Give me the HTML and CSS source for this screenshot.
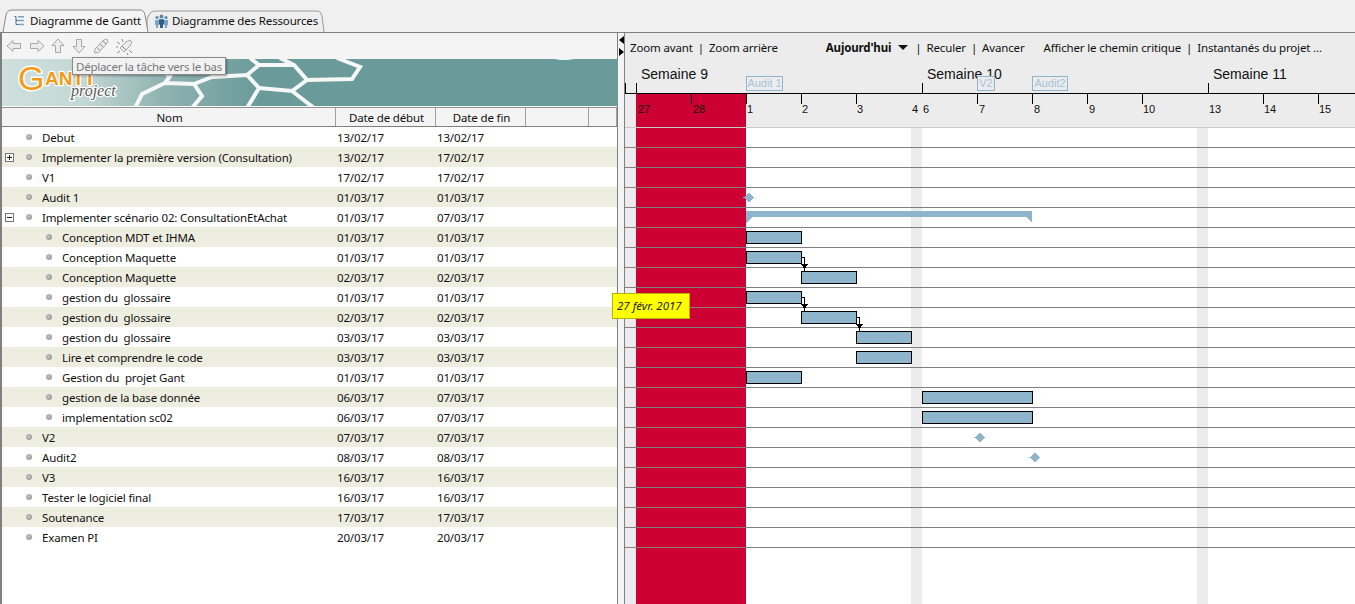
FILE: index.html
```html
<!DOCTYPE html>
<html lang="fr">
<head>
<meta charset="utf-8">
<title>GanttProject</title>
<link rel="stylesheet" href="styles.css">
</head>
<body>
<div class="app">
  <div class="tabbar">
    <svg class="tab-shapes" width="340" height="33" viewBox="0 0 340 33">
      <path class="tab-off" d="M147 32 L147 20 Q149 11 155 11 L318 11 Q321 11 322 16 L324 32"/>
      <path class="tab-on" d="M3 32 L6 15 Q7 10 12 10 L140 10 Q144 10 145 15 L148 32"/>
    </svg>
    <div class="tab tab-first">
      <svg width="12" height="12" viewBox="0 0 12 12"><g class="ico-tree"><path d="M1.5 1.5H3V9.5H5M3 5.5H5"/><path d="M5 1h6v1.5H5zM5 4.8h6v1.5H5zM5 8.7h6v1.5H5z"/></g></svg>
      <span>Diagramme de Gantt</span>
    </div>
    <div class="tab tab-second">
      <svg width="15" height="14" viewBox="0 0 15 14"><g class="ico-people"><circle cx="3" cy="3.5" r="1.6"/><circle cx="12" cy="3.5" r="1.6"/><circle cx="7.5" cy="2.5" r="1.9"/><path d="M1 6h4v5H4v3H2v-3H1zM10 6h4v5h-1v3h-2v-3h-1z"/><path class="front" d="M5 5.2h5v5.3H9V14H6v-3.500H5z"/></g></svg>
      <span>Diagramme des Ressources</span>
    </div>
  </div>

  <div class="main">
    <section class="tree-panel">
      <div class="toolbar">
        <svg width="16" height="14" viewBox="0 0 16 14"><path class="tool" d="M1 7 L7 1.500 V4.500 H14.500 V9.500 H7 V12.500 Z"/></svg>
        <svg class="tool-tight" width="16" height="14" viewBox="0 0 16 14"><path class="tool" d="M15 7 L9 1.500 V4.500 H1.500 V9.500 H9 V12.500 Z"/></svg>
        <svg width="14" height="16" viewBox="0 0 14 16"><path class="tool" d="M7 1 L13 7.500 H9.500 V14.500 H4.500 V7.500 H1 Z"/></svg>
        <svg width="14" height="16" viewBox="0 0 14 16"><path class="tool" d="M7 15 L13 8.500 H9.500 V1.500 H4.500 V8.500 H1 Z"/></svg>
        <svg width="16" height="16" viewBox="0 0 16 16"><path class="tool" d="M2 11 L10 2.500 L13.500 1 L15 3 L13.500 6 L5.500 14.500 L1.500 15 Z"/><path class="tool-line" d="M4 9.500 L7 12.500 M7 6 L10 9 M10 3 L13 6"/></svg>
        <svg width="18" height="17" viewBox="0 0 18 17"><path class="tool" d="M4 10 L10 4 L14 2 L16 4 L14 8 L8 14 Z"/><path class="tool-line" d="M6 8 L10 12 M1 4 L4 6 M6 1 L7 4 M1 15 L4 13 M13 12 L16 15 M2 9 H0 M11 15 L12 17"/></svg>
      </div>

      <div class="banner">
        <svg class="banner-art" width="616" height="47" viewBox="0 59 616 47">
          <defs>
            <linearGradient id="bannerFade" x1="0" x2="1" y1="0" y2="0">
              <stop offset="0" stop-color="#cfdfde"/>
              <stop offset="0.13" stop-color="#c4d8d6"/>
              <stop offset="0.26" stop-color="#8fb3b1"/>
              <stop offset="0.42" stop-color="#6a9a9a"/>
              <stop offset="1" stop-color="#6a9a9a"/>
            </linearGradient>
          </defs>
          <rect x="0" y="59" width="616" height="47" fill="url(#bannerFade)"/>
          <g class="hex">
            <path d="M133 108 L140 94 L163 83 L192 84 L200 96 L190 108"/>
            <path d="M163 83 L168 76 L158 70"/>
            <path d="M192 84 L210 77 L245 75 L257 88 L245 108"/>
            <path d="M245 75 L257 65 L248 58"/>
            <path d="M257 65 L292 65 L305 80 L290 91 L257 88"/>
            <path d="M292 65 L278 58"/>
            <path d="M305 80 L350 79 L358 67 L335 58"/>
            <path d="M290 91 L312 108"/>
          </g>
          <path class="hex-sliver" d="M553 59 H572 L566 60 H558 Z"/>
        </svg>
        <svg class="logo" width="125" height="46" viewBox="0 0 125 46">
          <text class="logo-g" x="14" y="30">G</text>
          <text class="logo-ant" x="41" y="25">ANTT</text>
          <text class="logo-project" x="67" y="36">project</text>
        </svg>
      </div>

      <div class="thead">
        <div class="th th-name">Nom</div>
        <div class="th th-start">Date de début</div>
        <div class="th th-end">Date de fin</div>
        <div class="th th-x1"></div>
        <div class="th th-x2"></div>
      </div>

      <div class="tbody">
        <div class="row"><div class="cell-name"><span class="gutter"></span><i class="bullet"></i><span>Debut</span></div><div class="cell-date">13/02/17</div><div class="cell-date">13/02/17</div></div>
        <div class="row alt"><div class="cell-name"><span class="gutter"><b class="toggle plus"></b></span><i class="bullet"></i><span>Implementer la première version (Consultation)</span></div><div class="cell-date">13/02/17</div><div class="cell-date">17/02/17</div></div>
        <div class="row"><div class="cell-name"><span class="gutter"></span><i class="bullet"></i><span>V1</span></div><div class="cell-date">17/02/17</div><div class="cell-date">17/02/17</div></div>
        <div class="row alt"><div class="cell-name"><span class="gutter"></span><i class="bullet"></i><span>Audit 1</span></div><div class="cell-date">01/03/17</div><div class="cell-date">01/03/17</div></div>
        <div class="row"><div class="cell-name"><span class="gutter"><b class="toggle"></b></span><i class="bullet"></i><span>Implementer scénario 02: ConsultationEtAchat</span></div><div class="cell-date">01/03/17</div><div class="cell-date">07/03/17</div></div>
        <div class="row alt"><div class="cell-name sub"><span class="gutter"></span><i class="bullet"></i><span>Conception MDT et IHMA</span></div><div class="cell-date">01/03/17</div><div class="cell-date">01/03/17</div></div>
        <div class="row"><div class="cell-name sub"><span class="gutter"></span><i class="bullet"></i><span>Conception Maquette</span></div><div class="cell-date">01/03/17</div><div class="cell-date">01/03/17</div></div>
        <div class="row alt"><div class="cell-name sub"><span class="gutter"></span><i class="bullet"></i><span>Conception Maquette</span></div><div class="cell-date">02/03/17</div><div class="cell-date">02/03/17</div></div>
        <div class="row"><div class="cell-name sub"><span class="gutter"></span><i class="bullet"></i><span>gestion du&nbsp; glossaire</span></div><div class="cell-date">01/03/17</div><div class="cell-date">01/03/17</div></div>
        <div class="row alt"><div class="cell-name sub"><span class="gutter"></span><i class="bullet"></i><span>gestion du&nbsp; glossaire</span></div><div class="cell-date">02/03/17</div><div class="cell-date">02/03/17</div></div>
        <div class="row"><div class="cell-name sub"><span class="gutter"></span><i class="bullet"></i><span>gestion du&nbsp; glossaire</span></div><div class="cell-date">03/03/17</div><div class="cell-date">03/03/17</div></div>
        <div class="row alt"><div class="cell-name sub"><span class="gutter"></span><i class="bullet"></i><span>Lire et comprendre le code</span></div><div class="cell-date">03/03/17</div><div class="cell-date">03/03/17</div></div>
        <div class="row"><div class="cell-name sub"><span class="gutter"></span><i class="bullet"></i><span>Gestion du&nbsp; projet Gant</span></div><div class="cell-date">01/03/17</div><div class="cell-date">01/03/17</div></div>
        <div class="row alt"><div class="cell-name sub"><span class="gutter"></span><i class="bullet"></i><span>gestion de la base donnée</span></div><div class="cell-date">06/03/17</div><div class="cell-date">07/03/17</div></div>
        <div class="row"><div class="cell-name sub"><span class="gutter"></span><i class="bullet"></i><span>implementation sc02</span></div><div class="cell-date">06/03/17</div><div class="cell-date">07/03/17</div></div>
        <div class="row alt"><div class="cell-name"><span class="gutter"></span><i class="bullet"></i><span>V2</span></div><div class="cell-date">07/03/17</div><div class="cell-date">07/03/17</div></div>
        <div class="row"><div class="cell-name"><span class="gutter"></span><i class="bullet"></i><span>Audit2</span></div><div class="cell-date">08/03/17</div><div class="cell-date">08/03/17</div></div>
        <div class="row alt"><div class="cell-name"><span class="gutter"></span><i class="bullet"></i><span>V3</span></div><div class="cell-date">16/03/17</div><div class="cell-date">16/03/17</div></div>
        <div class="row"><div class="cell-name"><span class="gutter"></span><i class="bullet"></i><span>Tester le logiciel final</span></div><div class="cell-date">16/03/17</div><div class="cell-date">16/03/17</div></div>
        <div class="row alt"><div class="cell-name"><span class="gutter"></span><i class="bullet"></i><span>Soutenance</span></div><div class="cell-date">17/03/17</div><div class="cell-date">17/03/17</div></div>
        <div class="row"><div class="cell-name"><span class="gutter"></span><i class="bullet"></i><span>Examen PI</span></div><div class="cell-date">20/03/17</div><div class="cell-date">20/03/17</div></div>
      </div>
    </section>

    <div class="splitter">
      <i class="grip grip-left"></i>
      <i class="grip grip-right"></i>
    </div>

    <section class="chart-panel">
      <div class="chart-toolbar">
        <span>Zoom avant</span><span class="sep">|</span><span>Zoom arrière</span>
        <strong class="today">Aujourd'hui</strong><i class="caret"></i><span class="sep sep-wide">|</span>
        <span>Reculer</span><span class="sep">|</span><span>Avancer</span>
        <span class="critical">Afficher le chemin critique</span><span class="sep">|</span><span>Instantanés du projet ...</span>
      </div>

      <div class="timeline">
        <span class="week" style="left:16px">Semaine 9</span>
        <span class="week" style="left:302px">Semaine 10</span>
        <span class="week" style="left:588px">Semaine 11</span>
        <i class="tick-up" style="left:0"></i>
        <i class="tick-up" style="left:11px"></i>
        <i class="tick-up" style="left:297px"></i>
        <i class="tick-up" style="left:583px"></i>
        <i class="axis"></i>
        <i class="today-head"></i>
        <i class="tick" style="left:66px"></i>
        <i class="tick" style="left:121px"></i>
        <i class="tick" style="left:176px"></i>
        <i class="tick" style="left:231px"></i>
        <i class="tick" style="left:352px"></i>
        <i class="tick" style="left:407px"></i>
        <i class="tick" style="left:462px"></i>
        <i class="tick" style="left:517px"></i>
        <i class="tick" style="left:638px"></i>
        <i class="tick" style="left:693px"></i>
        <span class="day" style="left:13px">27</span>
        <span class="day" style="left:68px">28</span>
        <span class="day" style="left:122px">1</span>
        <span class="day" style="left:177px">2</span>
        <span class="day" style="left:232px">3</span>
        <span class="day" style="left:287px">4</span>
        <span class="day" style="left:298px">6</span>
        <span class="day" style="left:354px">7</span>
        <span class="day" style="left:409px">8</span>
        <span class="day" style="left:464px">9</span>
        <span class="day" style="left:518px">10</span>
        <span class="day" style="left:584px">13</span>
        <span class="day" style="left:639px">14</span>
        <span class="day" style="left:694px">15</span>
        <span class="flag" style="left:121px;width:37px">Audit 1</span>
        <span class="flag" style="left:352px;width:18px">V2</span>
        <span class="flag" style="left:407px;width:36px">Audit2</span>
      </div>

      <div class="canvas">
        <i class="band band-off" style="left:0;width:11px"></i>
        <i class="band band-today" style="left:11px;width:110px"></i>
        <i class="band band-off" style="left:286px;width:11px"></i>
        <i class="band band-off" style="left:572px;width:11px"></i>
        <div class="lines">
          <div class="line first"></div><div class="line"></div><div class="line"></div><div class="line"></div>
          <div class="line"></div><div class="line"></div><div class="line"></div><div class="line"></div>
          <div class="line"></div><div class="line"></div><div class="line"></div><div class="line"></div>
          <div class="line"></div><div class="line"></div><div class="line"></div><div class="line"></div>
          <div class="line"></div><div class="line"></div><div class="line"></div><div class="line"></div>
          <div class="line"></div><div class="line"></div>
        </div>
        <svg class="graph" width="730" height="477" viewBox="625 127 730 477">
          <g class="task">
            <rect x="746.500" y="231.500" width="55" height="12"/>
            <rect x="746.500" y="251.500" width="55" height="12"/>
            <rect x="801.500" y="271.500" width="55" height="12"/>
            <rect x="746.500" y="291.500" width="55" height="12"/>
            <rect x="801.500" y="311.500" width="55" height="12"/>
            <rect x="856.500" y="331.500" width="55" height="12"/>
            <rect x="856.500" y="351.500" width="55" height="12"/>
            <rect x="746.500" y="371.500" width="55" height="12"/>
            <rect x="922.500" y="391.500" width="110" height="12"/>
            <rect x="922.500" y="411.500" width="110" height="12"/>
          </g>
          <g class="link">
            <path d="M802 257.500 H804.500 V271"/>
            <path d="M802 297.500 H804.500 V311"/>
            <path d="M857 317.500 H859.500 V331"/>
          </g>
          <g class="arrow">
            <path d="M801 264 H808 L804.500 269 Z"/>
            <path d="M801 304 H808 L804.500 309 Z"/>
            <path d="M856 324 H863 L859.500 329 Z"/>
          </g>
          <g class="mile">
            <path d="M749 192.500 L754.500 197.500 L749 202.500 L743.500 197.500 Z"/>
            <path d="M980 432.500 L985.500 437.500 L980 442.500 L974.500 437.500 Z"/>
            <path d="M1035 452.500 L1040.500 457.500 L1035 462.500 L1029.500 457.500 Z"/>
            <path d="M746 211 H1032 V223 L1026 217 H752 L746 223 Z"/>
          </g>
        </svg>
      </div>
    </section>
  </div>

  <div class="tooltip">Déplacer la tâche vers le bas</div>
  <div class="date-tip">27 févr. 2017</div>
</div>
</body>
</html>
```
FILE: styles.css
```css
* { box-sizing: border-box; }
html, body { margin: 0; padding: 0; }
body {
  width: 1355px;
  height: 604px;
  overflow: hidden;
  background: #f0f0f0;
  font-family: "Noto Sans", "Liberation Sans", sans-serif;
  font-size: 11.5px;
  letter-spacing: -0.15px;
  color: #101010;
}
.app { position: relative; display: flex; flex-direction: column; height: 604px; }

/* tabs */
.tabbar { position: relative; display: flex; height: 32px; flex: none; }
.tab-shapes { position: absolute; left: 0; top: 0; }
.tab-on { fill: #f5f5f5; stroke: #8a8a8a; stroke-width: 1; }
.tab-off { fill: #eeeeee; stroke: #9a9a9a; stroke-width: 1; }
.tab { position: relative; display: flex; align-items: center; height: 21px; margin-top: 10px; white-space: nowrap; }
.tab span { line-height: 21px; }
.tab-first { padding-left: 13px; width: 147px; }
.tab-first svg { margin-right: 5px; }
.tab-second { padding-left: 7px; }
.tab-second svg { margin-right: 3px; }
.ico-tree path:first-child { fill: none; stroke: #3f6c95; stroke-width: 1; }
.ico-tree path + path { fill: #7ea2bd; }
.ico-people circle { fill: #5d87ad; }
.ico-people path { fill: #7ea2c4; }
.ico-people .front { fill: #2f5f8e; }

/* layout */
.main { display: flex; flex: 1; min-height: 0; border-top: 1px solid #808080; }
.tree-panel {
  width: 618px;
  flex: none;
  display: flex;
  flex-direction: column;
  background: #fff;
  border-left: 2px solid #808080;
  border-right: 1px solid #808080;
}
.splitter { position: relative; width: 6px; flex: none; background: #f4f4f4; }
.grip { position: absolute; left: 1px; width: 0; height: 0; border-style: solid; }
.grip-left { top: 3px; border-width: 4.500px 5px 4.500px 0; border-color: transparent #000 transparent transparent; }
.grip-right { top: 15px; border-width: 4.500px 0 4.500px 5px; border-color: transparent transparent transparent #000; }
.chart-panel { position: relative; flex: 1; min-width: 0; background: #ececec; border-left: 1px solid #808080; }

/* left toolbar */
.toolbar { display: flex; align-items: center; height: 26px; flex: none; padding: 0 0 0 4px; gap: 7px; background: #f4f4f4; }
.tool-tight { margin-right: -1px; }
.tool { fill: #ececec; stroke: #a8a8a8; stroke-width: 1; }
.tool-line { fill: none; stroke: #8c8c8c; stroke-width: 1; }

/* banner */
.banner { position: relative; height: 47px; flex: none; }
.banner-art { display: block; }
.hex { fill: none; stroke: #f6f8f8; stroke-width: 4; stroke-linejoin: miter; }
.hex-sliver { fill: #eef3f3; }
.logo { position: absolute; left: 2px; top: 1px; }
.logo text { paint-order: stroke; stroke: #fff; stroke-linejoin: round; letter-spacing: 0; }
.logo-g { font: 34px "Liberation Sans", sans-serif; fill: #f59a14; stroke-width: 3px; }
.logo-ant { font: bold 19px "Liberation Sans", sans-serif; fill: #f59a14; stroke-width: 2.500px; }
.logo-project { font: italic 16px "Liberation Serif", serif; fill: #5a5a5a; stroke-width: 2.500px; }

/* table */
.thead { display: flex; height: 20px; flex: none; margin-top: 1px; background: #f4f4f4; border-top: 1px solid #909090; border-bottom: 1px solid #808080; }
.th { display: flex; align-items: center; justify-content: center; padding-left: 2px; border-right: 1px solid #a0a0a0; }
.th-name { width: 334px; }
.th-start { width: 100px; }
.th-end { width: 90px; }
.th-x1 { width: 63px; }
.th-x2 { width: 28px; }
.row { display: flex; align-items: center; height: 20px; }
.row.alt { background: #eeeee0; }
.cell-name { display: flex; align-items: center; width: 335px; }
.cell-date { width: 100px; padding-left: 0; }
.gutter { width: 24px; flex: none; padding-left: 3px; display: flex; }
.sub .gutter { width: 44px; }
.bullet {
  width: 6px;
  height: 6px;
  margin-right: 10px;
  border-radius: 50%;
  background: radial-gradient(circle at 40% 40%, #c4c4c4, #8c8c8c);
}
.toggle { position: relative; display: block; width: 9px; height: 9px; border: 1px solid #777; background: #fbfbfb; }
.toggle::before { content: ""; position: absolute; left: 1px; top: 3px; width: 5px; height: 1px; background: #222; }
.toggle.plus::after { content: ""; position: absolute; left: 3px; top: 1px; width: 1px; height: 5px; background: #222; }

/* chart toolbar */
.chart-toolbar { display: flex; align-items: center; height: 29px; padding-left: 5px; white-space: nowrap; }
.sep { margin: 0 5px; }
.sep-wide { margin-left: 7px; }
.today { margin-left: 48px; }
.caret { width: 0; height: 0; margin-left: 7px; border-style: solid; border-width: 5px 5px 0; border-color: #111 transparent transparent; }
.critical { margin-left: 19px; }

/* timeline */
.timeline { position: relative; height: 65px; letter-spacing: 0; }
.week { position: absolute; top: 3px; font: 14px/18px "Liberation Sans", sans-serif; color: #111; white-space: nowrap; }
.tick-up { position: absolute; top: 21px; width: 1px; height: 10px; background: #000; }
.axis { position: absolute; left: 0; right: 0; top: 31px; height: 1px; background: #000; }
.today-head { position: absolute; left: 11px; width: 110px; top: 32px; height: 33px; background: #cc0033; }
.tick { position: absolute; top: 32px; width: 1px; height: 10px; background: #000; }
.day { position: absolute; top: 40px; font: 11px/14px "Liberation Sans", sans-serif; color: #111; }
.flag {
  position: absolute;
  top: 14px;
  height: 15px;
  border: 1px solid #8fb5cc;
  font: 11px/13px "Liberation Sans", sans-serif;
  letter-spacing: 0;
  color: #a6c4d8;
  text-align: center;
  background: #ececec;
  white-space: nowrap;
}

/* canvas */
.canvas { position: relative; height: 477px; background: #fff; }
.band { position: absolute; top: 0; bottom: 0; }
.band-off { background: #ececec; }
.band-today { background: #cc0033; }
.lines { position: absolute; inset: 0; }
.line { height: 20px; border-top: 1px solid #808080; }
.line.first { border-top-color: #c8c8c8; }
.graph { position: absolute; left: 0; top: 0; shape-rendering: crispEdges; }
.task rect { fill: #8fb5cc; stroke: #000; stroke-width: 1; }
.link path { fill: none; stroke: #000; stroke-width: 1; }
.arrow path { fill: #000; }
.mile path { fill: #8fb5cc; }

/* overlays */
.tooltip {
  position: absolute;
  left: 72px;
  top: 57px;
  width: 154px;
  height: 18px;
  padding-left: 3px;
  line-height: 17px;
  letter-spacing: -0.25px;
  color: #77777c;
  background: #f1f1f1;
  border: 1px solid #8a8a8a;
  box-shadow: 1px 1px 2px rgba(0, 0, 0, .35);
  white-space: nowrap;
}
.date-tip {
  position: absolute;
  left: 612px;
  top: 293px;
  width: 78px;
  height: 26px;
  padding-left: 4px;
  line-height: 24px;
  letter-spacing: 0;
  font-style: italic;
  color: #222;
  background: #ffff00;
  border: 1px solid #b4b400;
  white-space: nowrap;
}
```
